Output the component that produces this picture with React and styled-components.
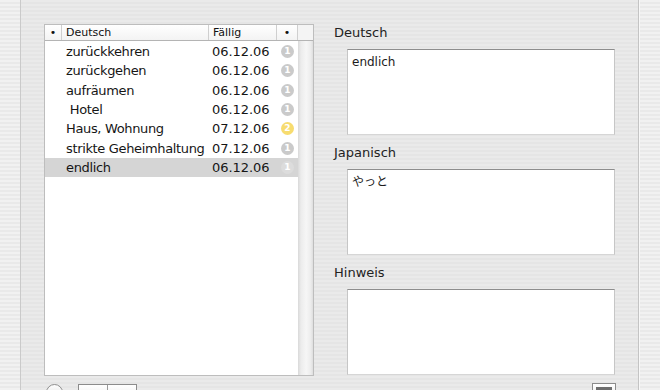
import styled, { createGlobalStyle } from "styled-components";

const GlobalStyle = createGlobalStyle`
	html, body {
		margin: 0;
		padding: 0;
		background: #ededed;
	}
	body {
		width: 660px;
		height: 390px;
		overflow: hidden;
		font-family: "DejaVu Sans", "Noto Sans CJK JP", sans-serif;
		color: #1c1c1c;
	}
`;

const words = [
	{ de: "zurückkehren", due: "06.12.06", level: 1 },
	{ de: "zurückgehen", due: "06.12.06", level: 1 },
	{ de: "aufräumen", due: "06.12.06", level: 1 },
	{ de: "\u00a0Hotel", due: "06.12.06", level: 1 },
	{ de: "Haus, Wohnung", due: "07.12.06", level: 2 },
	{ de: "strikte Geheimhaltung", due: "07.12.06", level: 1 },
	{ de: "endlich", due: "06.12.06", level: 1, selected: true },
];

const fields = [
	{ label: "Deutsch", value: "endlich" },
	{ label: "Japanisch", value: "やっと" },
	{ label: "Hinweis", value: "" },
];

function WordRow({ word }) {
	return (
		<Row $selected={word.selected}>
			<span />
			<Cell>{word.de}</Cell>
			<DateCell>{word.due}</DateCell>
			<BadgeCell>
				<Badge $tone={word.selected ? "muted" : word.level === 2 ? "yellow" : "gray"}>
					{word.level}
				</Badge>
			</BadgeCell>
		</Row>
	);
}

export default function App() {
	return (
		<>
			<GlobalStyle />
			<Window>
				<Gutter />
				<Panel>
					<ListColumn>
						<Table>
							<HeaderRow>
								<HeaderCell $center>•</HeaderCell>
								<HeaderCell>Deutsch</HeaderCell>
								<HeaderCell>Fällig</HeaderCell>
								<HeaderCell $center>•</HeaderCell>
								<HeaderCorner />
							</HeaderRow>
							<TableBody>
								<Rows>
									{words.map((word) => (
										<WordRow key={word.de} word={word} />
									))}
								</Rows>
								<ScrollTrack />
							</TableBody>
						</Table>
						<Controls>
							<RoundButton />
							<Segmented>
								<SegButton />
								<SegButton />
							</Segmented>
						</Controls>
					</ListColumn>
					<Form>
						{fields.map((field) => (
							<Field key={field.label}>
								<FieldLabel>{field.label}</FieldLabel>
								<TextBox>{field.value}</TextBox>
							</Field>
						))}
						<FormControls>
							<SmallButton>
								<ButtonBar />
							</SmallButton>
						</FormControls>
					</Form>
				</Panel>
				<Gutter $grow />
			</Window>
		</>
	);
}

const stripes = (a, b) => `repeating-linear-gradient(to bottom, ${a} 0 2px, ${b} 2px 4px)`;

const Window = styled.div`
	display: flex;
	width: 660px;
	height: 390px;
	overflow: hidden;
	background: ${stripes("#f1f1f1", "#e9e9e9")};
`;

const Gutter = styled.div`
	flex: ${(p) => (p.$grow ? "1" : "none")};
	width: 20px;
`;

const Panel = styled.div`
	width: 619px;
	height: 420px;
	flex: none;
	display: flex;
	align-items: flex-start;
	gap: 20px;
	padding: 24px 0 0 23px;
	box-sizing: border-box;
	border-left: 1px solid #cacaca;
	border-right: 1px solid #c4c4c4;
	box-shadow: 1px 0 0 #f8f8f8;
	background: ${stripes("#eaeaea", "#e5e5e5")};
`;

const ListColumn = styled.div`
	display: flex;
	flex-direction: column;
	width: 270px;
	flex: none;
`;

const Table = styled.div`
	height: 352px;
	flex: none;
	box-sizing: border-box;
	border: 1px solid #bdbdbd;
	background: #fff;
	display: flex;
	flex-direction: column;
`;

const columns = "17px 147px 68px 21px";

const HeaderRow = styled.div`
	display: grid;
	grid-template-columns: ${columns} 15px;
	height: 15px;
	flex: none;
	border-bottom: 1px solid #b4b4b4;
	background: linear-gradient(to bottom, #ffffff, #f3f3f3);
`;

const HeaderCell = styled.div`
	font-size: 11px;
	line-height: 15px;
	padding-left: ${(p) => (p.$center ? "0" : "4px")};
	text-align: ${(p) => (p.$center ? "center" : "left")};
	border-right: 1px solid #cfcfcf;
	color: #111;
	white-space: nowrap;
	overflow: hidden;
`;

const HeaderCorner = styled.div`
	background: #f4f4f4;
`;

const TableBody = styled.div`
	flex: 1;
	display: flex;
`;

const Rows = styled.div`
	width: 253px;
	padding-top: 1px;
`;

const ScrollTrack = styled.div`
	flex: 1;
	background: linear-gradient(
		to right,
		#d9d9d9,
		#ececec 20%,
		#f6f6f6 55%,
		#ececec 85%,
		#dedede
	);
`;

const Row = styled.div`
	display: grid;
	grid-template-columns: ${columns};
	height: 19.3px;
	align-items: center;
	background: ${(p) => (p.$selected ? "#d5d5d5" : "transparent")};
	font-size: 13px;
	color: #161616;
`;

const Cell = styled.span`
	padding-left: 4px;
	white-space: pre;
	overflow: hidden;
	letter-spacing: -0.35px;
`;

const DateCell = styled.span`
	padding-left: 3px;
	letter-spacing: -0.05px;
`;

const BadgeCell = styled.span`
	display: flex;
	justify-content: center;
`;

const badgeColors = {
	gray: "#cacaca",
	yellow: "#f7dc6f",
	muted: "#dcdcdc",
};

const Badge = styled.span`
	width: 13px;
	height: 13px;
	border-radius: 50%;
	background: ${(p) => badgeColors[p.$tone]};
	color: #fff;
	font-size: 9px;
	font-weight: bold;
	line-height: 13px;
	text-align: center;
`;

const Controls = styled.div`
	display: flex;
	align-items: flex-start;
	gap: 15px;
	margin-top: 8px;
	padding-left: 2px;
`;

const RoundButton = styled.div`
	width: 15px;
	height: 15px;
	border-radius: 50%;
	border: 1px solid #8f8f8f;
	background: linear-gradient(to bottom, #fdfdfd, #e2e2e2);
`;

const Segmented = styled.div`
	display: flex;
	border: 1px solid #8c8c8c;
	background: linear-gradient(to bottom, #ffffff, #e6e6e6);
`;

const SegButton = styled.div`
	width: 28px;
	height: 20px;
	& + & {
		border-left: 1px solid #9a9a9a;
	}
`;

const Form = styled.div`
	display: flex;
	flex-direction: column;
	gap: 10px;
	padding-top: 1px;
	width: 282px;
	flex: none;
`;

const Field = styled.div`
	display: flex;
	flex-direction: column;
`;

const FieldLabel = styled.div`
	font-size: 13px;
	line-height: 16px;
	margin-bottom: 8px;
	color: #222;
`;

const TextBox = styled.div`
	margin-left: 13px;
	width: 268px;
	height: 86px;
	box-sizing: border-box;
	padding: 4px 4px;
	background: #fff;
	border: 1px solid #c6c6c6;
	border-top: 1px solid #8e8e8e;
	border-bottom-color: #d6d6d6;
	font-size: 12px;
	line-height: 16px;
	font-family: "DejaVu Sans", "Noto Sans CJK JP", sans-serif;
`;

const FormControls = styled.div`
	display: flex;
	justify-content: flex-end;
	margin-top: -2px;
`;

const SmallButton = styled.div`
	width: 24px;
	height: 20px;
	border: 1px solid #8c8c8c;
	background: linear-gradient(to bottom, #ffffff, #e6e6e6);
	display: flex;
	justify-content: center;
	padding-top: 3px;
	box-sizing: border-box;
`;

const ButtonBar = styled.div`
	width: 16px;
	height: 3px;
	background: #6e6e6e;
`;
